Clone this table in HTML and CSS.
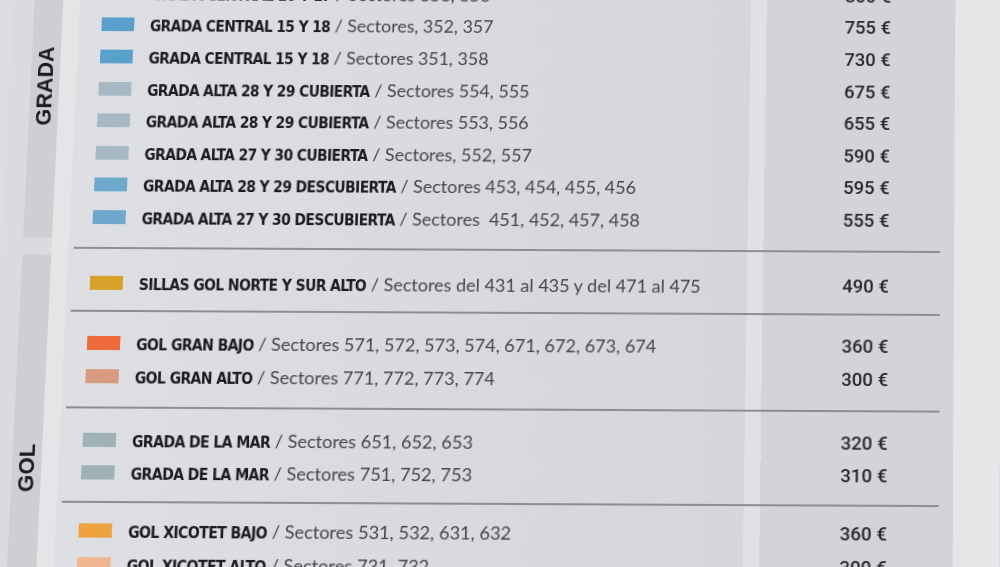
FILE: index.html
```html
<!DOCTYPE html>
<html lang="es">
<head>
<meta charset="utf-8">
<title>Precios abonos</title>
<link rel="stylesheet" href="styles.css">
</head>
<body>
<div class="page">
  <div class="group group-grada">
    <div class="side"><div class="bar bar-grada"><span class="bar-label">GRADA</span></div></div>
    <div class="sections">
      <div class="section">
        <div class="row"><span class="swatch c-central"></span><span class="label"><b class="name">GRADA CENTRAL 16 Y 17</b><span class="sectors"> / Sectores 353, 356</span></span><span class="price">800 €</span></div>
        <div class="row"><span class="swatch c-central"></span><span class="label"><b class="name">GRADA CENTRAL 15 Y 18</b><span class="sectors"> / Sectores, 352, 357</span></span><span class="price">755 €</span></div>
        <div class="row"><span class="swatch c-central"></span><span class="label"><b class="name">GRADA CENTRAL 15 Y 18</b><span class="sectors"> / Sectores 351, 358</span></span><span class="price">730 €</span></div>
        <div class="row"><span class="swatch c-cubierta"></span><span class="label"><b class="name">GRADA ALTA 28 Y 29 CUBIERTA</b><span class="sectors"> / Sectores 554, 555</span></span><span class="price">675 €</span></div>
        <div class="row"><span class="swatch c-cubierta"></span><span class="label"><b class="name">GRADA ALTA 28 Y 29 CUBIERTA</b><span class="sectors"> / Sectores 553, 556</span></span><span class="price">655 €</span></div>
        <div class="row"><span class="swatch c-cubierta"></span><span class="label"><b class="name">GRADA ALTA 27 Y 30 CUBIERTA</b><span class="sectors"> / Sectores, 552, 557</span></span><span class="price">590 €</span></div>
        <div class="row"><span class="swatch c-descubierta"></span><span class="label"><b class="name">GRADA ALTA 28 Y 29 DESCUBIERTA</b><span class="sectors"> / Sectores 453, 454, 455, 456</span></span><span class="price">595 €</span></div>
        <div class="row"><span class="swatch c-descubierta"></span><span class="label"><b class="name">GRADA ALTA 27 Y 30 DESCUBIERTA</b><span class="sectors"> / Sectores&nbsp; 451, 452, 457, 458</span></span><span class="price">555 €</span></div>
      </div>
    </div>
  </div>
  <div class="group group-gol">
    <div class="side"><div class="bar bar-gol"><span class="bar-label">GOL</span></div></div>
    <div class="sections">
      <div class="section section-sillas">
        <div class="row"><span class="swatch c-sillas"></span><span class="label"><b class="name">SILLAS GOL NORTE Y SUR ALTO</b><span class="sectors"> / Sectores del 431 al 435 y del 471 al 475</span></span><span class="price">490 €</span></div>
      </div>
      <div class="section">
        <div class="row"><span class="swatch c-granbajo"></span><span class="label"><b class="name">GOL GRAN BAJO</b><span class="sectors"> / Sectores 571, 572, 573, 574, 671, 672, 673, 674</span></span><span class="price">360 €</span></div>
        <div class="row"><span class="swatch c-granalto"></span><span class="label"><b class="name">GOL GRAN ALTO</b><span class="sectors"> / Sectores 771, 772, 773, 774</span></span><span class="price">300 €</span></div>
      </div>
      <div class="section section-mar">
        <div class="row"><span class="swatch c-mar"></span><span class="label"><b class="name">GRADA DE LA MAR</b><span class="sectors"> / Sectores 651, 652, 653</span></span><span class="price">320 €</span></div>
        <div class="row"><span class="swatch c-mar"></span><span class="label"><b class="name">GRADA DE LA MAR</b><span class="sectors"> / Sectores 751, 752, 753</span></span><span class="price">310 €</span></div>
      </div>
      <div class="section section-xicotet">
        <div class="row"><span class="swatch c-xbajo"></span><span class="label"><b class="name">GOL XICOTET BAJO</b><span class="sectors"> / Sectores 531, 532, 631, 632</span></span><span class="price">360 €</span></div>
        <div class="row"><span class="swatch c-xalto"></span><span class="label"><b class="name">GOL XICOTET ALTO</b><span class="sectors"> / Sectores 731, 732</span></span><span class="price">300 €</span></div>
      </div>
    </div>
  </div>
</div>
</body>
</html>
```
FILE: styles.css
```css
html, body {
  margin: 0;
  padding: 0;
  height: 100%;
  overflow: hidden;
  background: #dcdde0;
}

.page {
  width: 1000px;
  margin-top: -38px;
  padding-bottom: 120px;
  background: linear-gradient(to right,
    #dadbde 0, #dadbde 50px,
    #e4e5e7 50px, #e4e5e7 67px,
    #dedfe2 67px, #d4d6da 747px,
    #e0e1e4 747px, #e0e1e4 763px,
    #d2d4d9 763px, #d2d4d9 954px,
    #e5e6e8 954px);
  transform-origin: 950px 318px;
  transform: perspective(1000px) rotateX(2.7deg) rotate(0.28deg);
  display: flex;
  flex-direction: column;
}

.group {
  display: flex;
  align-items: stretch;
}

.side {
  width: 67px;
  box-sizing: border-box;
  padding-left: 21px;
  display: flex;
  flex-shrink: 0;
}

.bar {
  width: 29px;
  background: #cdcfd3;
  display: flex;
  justify-content: center;
}

.bar-grada {
  margin-bottom: 9px;
  align-items: center;
  padding-bottom: 28px;
}

.bar-gol {
  margin-top: 8px;
  align-items: flex-start;
  padding-top: 188px;
  margin-bottom: -200px;
}

.bar-label {
  writing-mode: vertical-rl;
  transform: rotate(180deg);
  font-family: "Liberation Sans", Arial, sans-serif;
  font-weight: 700;
  font-size: 22px;
  line-height: 1;
  color: #1b1c1f;
}

.sections {
  width: 868px;
  margin-left: 5px;
  display: flex;
  flex-direction: column;
}

.section {
  padding: 14.5px 0 14px;
  border-top: 2px solid #8c8e92;
}

.group-grada .section:first-child {
  border-top: 0;
}

.section-sillas {
  padding-top: 17px;
  padding-bottom: 11.5px;
}

.section-mar {
  padding-bottom: 11px;
}

.section-xicotet {
  padding-top: 11px;
}

.row {
  height: 32.6px;
  display: flex;
  align-items: center;
  white-space: nowrap;
}

.swatch {
  width: 33px;
  height: 14px;
  margin-left: 18px;
  margin-right: 16px;
  flex-shrink: 0;
}

.label {
  flex: 1;
  overflow: hidden;
}

.name {
  font-family: "DejaVu Sans Condensed", "DejaVu Sans", sans-serif;
  font-stretch: condensed;
  font-weight: 700;
  font-size: 15.5px;
  letter-spacing: -0.6px;
  color: #1b1c1f;
}

.sectors {
  font-family: Lato, "Open Sans", sans-serif;
  font-size: 18px;
  color: #45464a;
}

.price {
  padding-right: 51px;
  font-family: Roboto, "DejaVu Sans", sans-serif;
  font-weight: 500;
  font-size: 18.5px;
  color: #28292d;
}

.c-central { background: #5aa0cc; }
.c-cubierta { background: #a7b9c4; }
.c-descubierta { background: #6ea8cc; }
.c-sillas { background: #d9a02a; }
.c-granbajo { background: #ee6a3c; }
.c-granalto { background: #d99b80; }
.c-mar { background: #a0b1b8; }
.c-xbajo { background: #eea33f; }
.c-xalto { background: #efb690; }
```
